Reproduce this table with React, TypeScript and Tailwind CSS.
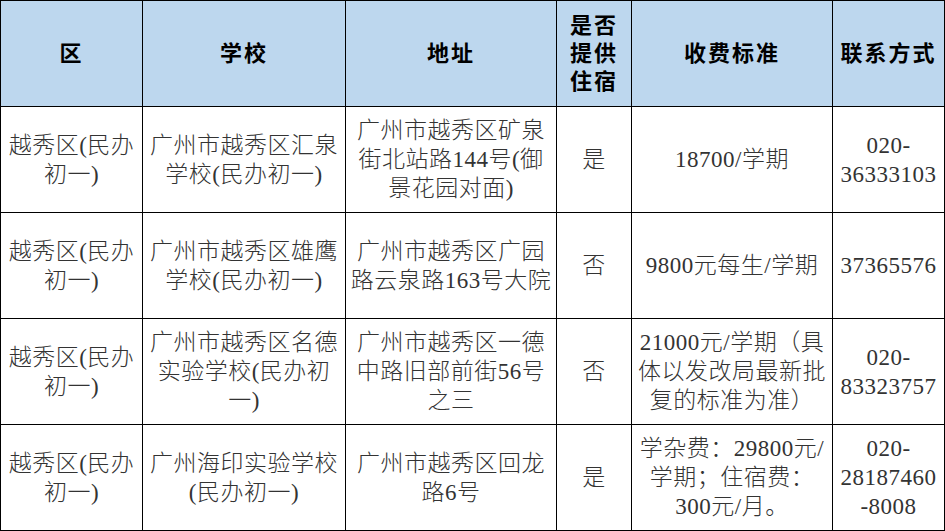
import React from "react"

type Row = {
  district: string[]
  school: string[]
  address: string[]
  boarding: string[]
  fee: string[]
  phone: string[]
}

const rows: Row[] = [
  {
    district: ["越秀区(民办", "初一)"],
    school: ["广州市越秀区汇泉", "学校(民办初一)"],
    address: ["广州市越秀区矿泉", "街北站路144号(御", "景花园对面)"],
    boarding: ["是"],
    fee: ["18700/学期"],
    phone: ["020-", "36333103"],
  },
  {
    district: ["越秀区(民办", "初一)"],
    school: ["广州市越秀区雄鹰", "学校(民办初一)"],
    address: ["广州市越秀区广园", "路云泉路163号大院"],
    boarding: ["否"],
    fee: ["9800元每生/学期"],
    phone: ["37365576"],
  },
  {
    district: ["越秀区(民办", "初一)"],
    school: ["广州市越秀区名德", "实验学校(民办初", "一)"],
    address: ["广州市越秀区一德", "中路旧部前街56号", "之三"],
    boarding: ["否"],
    fee: ["21000元/学期（具", "体以发改局最新批", "复的标准为准）"],
    phone: ["020-", "83323757"],
  },
  {
    district: ["越秀区(民办", "初一)"],
    school: ["广州海印实验学校", "(民办初一)"],
    address: ["广州市越秀区回龙", "路6号"],
    boarding: ["是"],
    fee: ["学杂费：29800元/", "学期；住宿费：", "300元/月。"],
    phone: ["020-", "28187460", "-8008"],
  },
]

const headers: string[][] = [["区"], ["学校"], ["地址"], ["是否", "提供", "住宿"], ["收费标准"], ["联系方式"]]
const widths = ["w-[142px]", "w-[203px]", "w-[211px]", "w-[75px]", "w-[201px]", "w-[112px]"]

function Lines({ lines }: { lines: string[] }) {
  return (
    <>
      {lines.map((l, i) => (
        <div key={i} className="whitespace-nowrap">
          {l}
        </div>
      ))}
    </>
  )
}

export default function App() {
  return (
    <div className="w-[945px] h-[531px] bg-white overflow-hidden font-['Liberation_Serif','Noto_Sans_CJK_SC',serif]">
      <table className="w-[945px] table-fixed border-collapse">
        <colgroup>
          {widths.map((w, i) => (
            <col key={i} className={w} />
          ))}
        </colgroup>
        <thead>
          <tr className="h-[106px] bg-[#bdd7ee]">
            {headers.map((h, i) => (
              <th
                key={i}
                className="border border-black text-center align-middle font-['Liberation_Serif','Noto_Sans_CJK_SC',serif] text-[22px] leading-[28px] font-bold tracking-[2px] text-black p-0"
              >
                <Lines lines={h} />
              </th>
            ))}
          </tr>
        </thead>
        <tbody>
          {rows.map((r, i) => (
            <tr key={i} className="h-[106px]">
              {[r.district, r.school, r.address, r.boarding, r.fee, r.phone].map((c, j) => (
                <td
                  key={j}
                  className="border border-black text-center align-middle font-['Liberation_Serif','Noto_Sans_CJK_SC',serif] text-[23px] leading-[29px] font-light tracking-[0.5px] text-[#333] p-0"
                >
                  <Lines lines={c} />
                </td>
              ))}
            </tr>
          ))}
        </tbody>
      </table>
    </div>
  )
}
